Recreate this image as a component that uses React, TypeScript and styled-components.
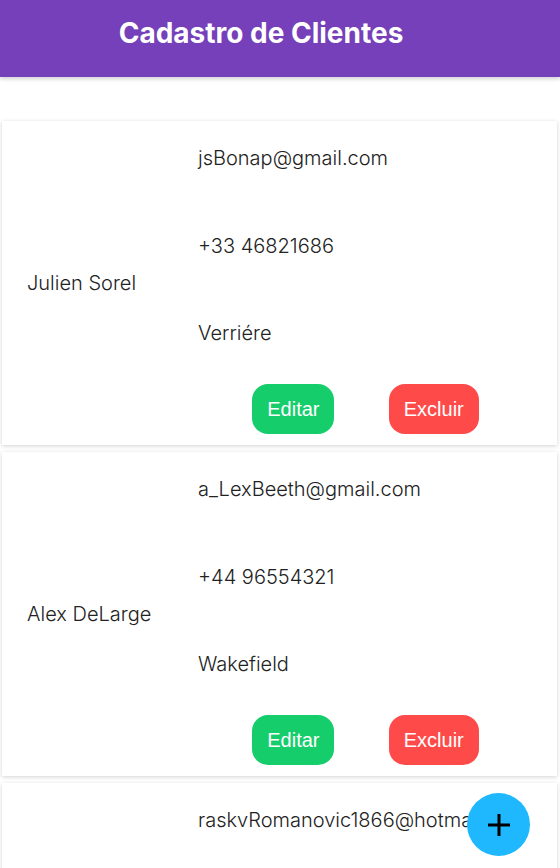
import React from "react";
import styled, { createGlobalStyle } from "styled-components";

const Global = createGlobalStyle`
  html, body { margin: 0; padding: 0; background: #fff; }
  body { font-family: Inter, "Noto Sans", sans-serif; overflow: hidden; }
  * { box-sizing: border-box; }
`;

const Page = styled.div`
  width: 560px;
  height: 868px;
  position: relative;
  overflow: hidden;
`;

const Header = styled.header`
  height: 77px;
  background: #7540b9;
  box-shadow: 0 2px 4px rgba(0, 0, 0, 0.18);
  display: flex;
  justify-content: center;
  padding: 14px 38px 0 0;
`;

const Title = styled.h1`
  margin: 0;
  color: #fff;
  font-family: Inter, sans-serif;
  font-weight: 700;
  font-size: 28px;
  line-height: 38px;
`;

const List = styled.main`
  display: flex;
  flex-direction: column;
  gap: 7px;
  padding: 44px 3px 0 2px;
`;

const Card = styled.section`
  display: flex;
  align-items: center;
  background: #fff;
  box-shadow: 0 1px 4px rgba(0, 0, 0, 0.18);
  min-height: 324px;
`;

const Name = styled.div`
  width: 196px;
  padding-left: 25px;
  font-size: 20px;
  font-weight: 300;
  color: #222;
  line-height: 24px;
`;

const Info = styled.div`
  flex: 1;
  display: flex;
  flex-direction: column;
  padding: 25px 0 11px;
`;

const Field = styled.p`
  margin: 0 0 63.5px;
  font-size: 20px;
  font-weight: 300;
  color: #222;
  line-height: 24px;
  white-space: nowrap;
  &:nth-of-type(3) { margin-bottom: 39px; }
`;

const Actions = styled.div`
  display: flex;
  justify-content: space-evenly;
  width: 335px;
`;

const Button = styled.button<{ $variant: "edit" | "delete" }>`
  height: 50px;
  padding: 0 15px;
  border: none;
  border-radius: 16px;
  background: ${(p) => (p.$variant === "edit" ? "#15cd6b" : "#ff4a4a")};
  color: #fff;
  font-family: "Liberation Sans", Arial, sans-serif;
  font-size: 20px;
  cursor: pointer;
`;

const Fab = styled.button`
  position: absolute;
  left: 467px;
  top: 793px;
  width: 63px;
  height: 63px;
  border-radius: 50%;
  border: none;
  background: #1fb8ff;
  display: flex;
  align-items: center;
  justify-content: center;
  padding: 0;
`;

const clients = [
  { name: "Julien Sorel", email: "jsBonap@gmail.com", phone: "+33 46821686", city: "Verriére" },
  { name: "Alex DeLarge", email: "a_LexBeeth@gmail.com", phone: "+44 96554321", city: "Wakefield" },
  { name: "Rodion Raskolnikov", email: "raskvRomanovic1866@hotmail.com", phone: "+7 91234567", city: "São Petersburgo" },
];

export default function App() {
  return (
    <Page>
      <Global />
      <Header>
        <Title>Cadastro de Clientes</Title>
      </Header>
      <List>
        {clients.map((c) => (
          <Card key={c.email}>
            <Name>{c.name}</Name>
            <Info>
              <Field>{c.email}</Field>
              <Field>{c.phone}</Field>
              <Field>{c.city}</Field>
              <Actions>
                <Button $variant="edit">Editar</Button>
                <Button $variant="delete">Excluir</Button>
              </Actions>
            </Info>
          </Card>
        ))}
      </List>
      <Fab aria-label="Adicionar">
        <svg width="24" height="24" viewBox="0 0 24 24">
          <path d="M12 1v22M1 12h22" stroke="#000" strokeWidth="3" />
        </svg>
      </Fab>
    </Page>
  );
}
